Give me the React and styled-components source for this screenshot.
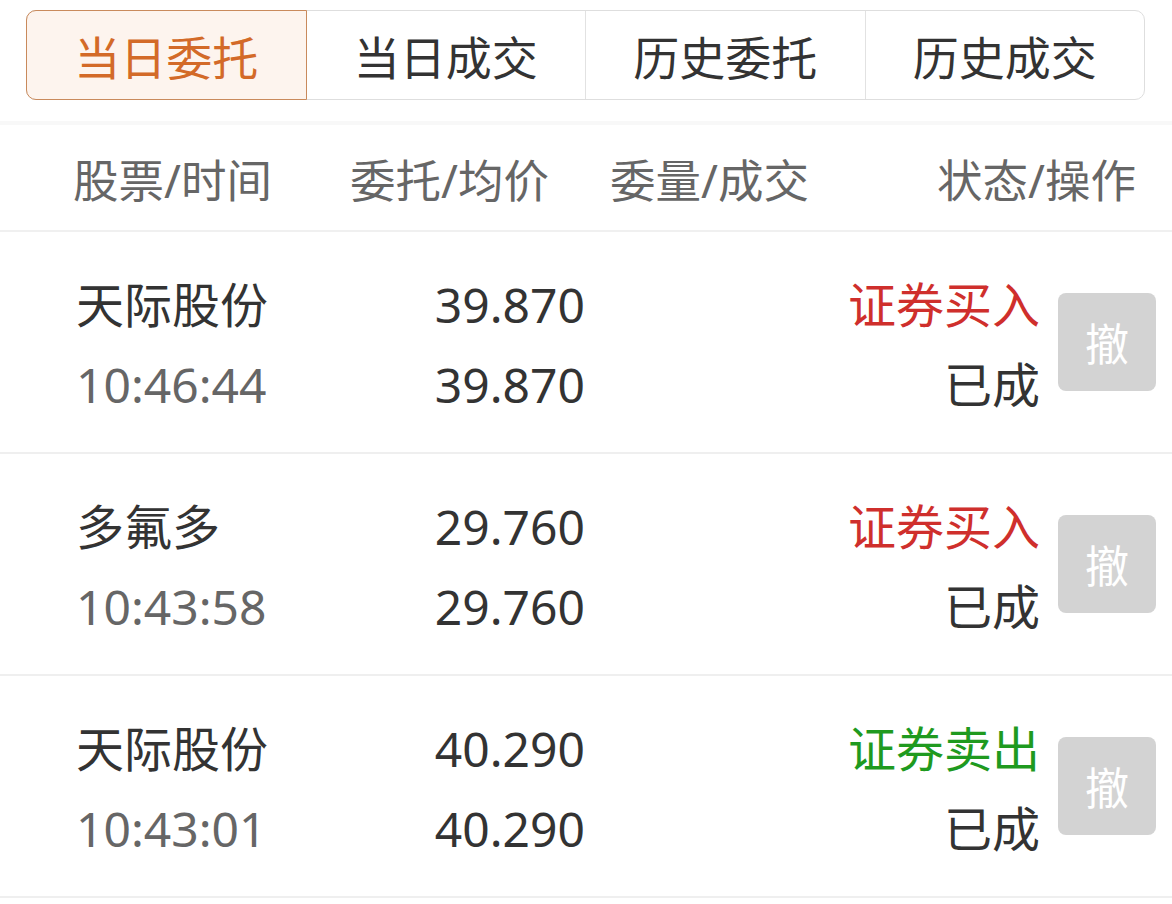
import React from 'react'
import styled, { createGlobalStyle } from 'styled-components'

const GlobalStyle = createGlobalStyle`
  body {
    margin: 0;
    background: #fff;
    font-family: "Noto Sans", "Noto Sans CJK SC", sans-serif;
  }
`

const Page = styled.div`
  width: 1172px;
  padding-top: 10px;
`

const Tabs = styled.div`
  display: flex;
  height: 90px;
  margin: 0 27px 0 26px;
  border: 1px solid #dedede;
  border-radius: 10px;
  box-sizing: border-box;
`

const Tab = styled.div`
  flex: 1;
  display: flex;
  align-items: center;
  justify-content: center;
  font-size: 46px;
  color: ${(p) => (p.active ? '#d36a28' : '#333')};
  background: ${(p) => (p.active ? '#fdf4ee' : 'transparent')};
  border-left: ${(p) => (p.first ? 'none' : '1px solid #e2e2e2')};
  margin: ${(p) => (p.active ? '-1px 0 -1px -1px' : '0')};
  border: ${(p) => (p.active ? '1px solid #c98a5c' : undefined)};
  border-radius: ${(p) => (p.active ? '10px 0 0 10px' : '0')};
`

const Strip = styled.div`
  height: 4px;
  margin-top: 21px;
  background: #f8f8f8;
`

const Header = styled.div`
  display: grid;
  grid-template-columns: 277px 260px 327px auto;
  align-items: center;
  height: 105px;
  padding-left: 73px;
  border-bottom: 2px solid #f0f0f0;
  font-size: 45.5px;
  color: #666;
  white-space: nowrap;
`

const Row = styled.div`
  display: grid;
  grid-template-columns: 250px 259px 1fr 260px 98px;
  align-items: center;
  height: 220px;
  padding: 0 16px 0 76px;
  border-bottom: 2px solid #efefef;
`

const Cell = styled.div`
  display: flex;
  flex-direction: column;
  align-items: ${(p) => (p.right ? 'flex-end' : 'flex-start')};
  margin-top: 6px;
`

const Line = styled.div`
  font-size: 48px;
  line-height: 80px;
  white-space: nowrap;
  color: ${(p) => p.color || '#333'};
`

const Status = styled(Cell)`
  margin-right: 18px;
`

const CancelButton = styled.div`
  width: 98px;
  height: 98px;
  border-radius: 8px;
  background: #d3d3d3;
  color: #fff;
  font-size: 44px;
  display: flex;
  align-items: center;
  justify-content: center;
`

const tabs = ['当日委托', '当日成交', '历史委托', '历史成交']

const orders = [
  { name: '天际股份', time: '10:46:44', price: '39.870', avg: '39.870', side: '证券买入', buy: true },
  { name: '多氟多', time: '10:43:58', price: '29.760', avg: '29.760', side: '证券买入', buy: true },
  { name: '天际股份', time: '10:43:01', price: '40.290', avg: '40.290', side: '证券卖出', buy: false },
]

export default function App() {
  return (
    <Page>
      <GlobalStyle />
      <Tabs>
        {tabs.map((t, i) => (
          <Tab key={t} active={i === 0} first={i === 0 || i === 1}>
            {t}
          </Tab>
        ))}
      </Tabs>
      <Strip />
      <Header>
        <span>股票/时间</span>
        <span>委托/均价</span>
        <span>委量/成交</span>
        <span>状态/操作</span>
      </Header>
      {orders.map((o, i) => (
        <Row key={i}>
          <Cell>
            <Line>{o.name}</Line>
            <Line color="#666">{o.time}</Line>
          </Cell>
          <Cell right>
            <Line>{o.price}</Line>
            <Line>{o.avg}</Line>
          </Cell>
          <div />
          <Status right>
            <Line color={o.buy ? '#cf2f2c' : '#1f9a1f'}>{o.side}</Line>
            <Line>已成</Line>
          </Status>
          <CancelButton>撤</CancelButton>
        </Row>
      ))}
    </Page>
  )
}
